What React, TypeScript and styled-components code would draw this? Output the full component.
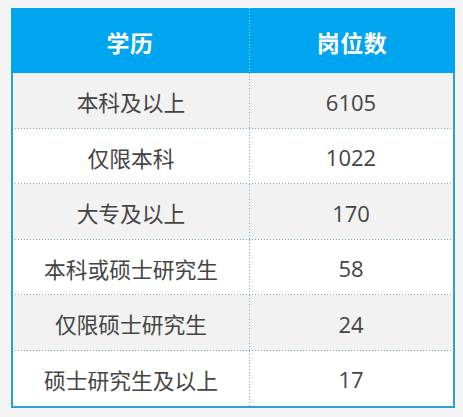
import styled, { createGlobalStyle } from "styled-components";

const GlobalStyle = createGlobalStyle`
  html, body {
    margin: 0;
    padding: 0;
    background: #f4f4f4;
  }
  body {
    font-family: "Open Sans", "Noto Sans CJK SC", sans-serif;
  }
`;

const Page = styled.div`
  width: 463px;
  height: 417px;
  padding: 8px 0 0 11px;
  box-sizing: border-box;
`;

const Table = styled.div`
  width: 444px;
`;

const dotsX = (color: string) => `
  repeating-linear-gradient(to right, ${color} 0 1px, transparent 1px 3px)
`;
const dotsY = (color: string) => `
  repeating-linear-gradient(to bottom, ${color} 0 1px, transparent 1px 3px)
`;

const HeaderRow = styled.div`
  display: grid;
  grid-template-columns: 238px 1fr;
  height: 65px;
  background: #00a5f0;
`;

const HeadCell = styled.div<{ $divider?: boolean }>`
  display: flex;
  align-items: center;
  justify-content: center;
  color: #fff;
  font-family: "Noto Sans CJK SC", sans-serif;
  font-weight: 700;
  font-size: 23px;
  letter-spacing: 0.5px;
  padding-top: 2px;
  box-sizing: border-box;
  ${(p) =>
    p.$divider &&
    `
    background: ${dotsY("rgba(255,255,255,0.75)")};
    background-size: 1px 100%;
    background-repeat: no-repeat;
  `}
`;

const Body = styled.div`
  border: 2px solid #2c9fd5;
  border-top: none;
`;

const Row = styled.div<{ $shade: boolean; $last: boolean }>`
  display: grid;
  grid-template-columns: 236px 1fr;
  height: 55.5px;
  background-color: ${(p) => (p.$shade ? "#f2f2f2" : "#ffffff")};
  ${(p) =>
    !p.$last &&
    `
    background-image: ${dotsX("#7fa9c2")};
    background-size: calc(100% - 4px) 1px;
    background-position: 2px 100%;
    background-repeat: no-repeat;
  `}
`;

const Cell = styled.div<{ $divider?: boolean; $num?: boolean }>`
  display: flex;
  align-items: center;
  justify-content: center;
  color: #444;
  font-family: ${(p) =>
    p.$num ? `"Open Sans", sans-serif` : `"Noto Sans CJK SC", sans-serif`};
  font-size: ${(p) => (p.$num ? "22px" : "21.75px")};
  padding-top: 2px;
  box-sizing: border-box;
  ${(p) =>
    p.$divider &&
    `
    background-image: ${dotsY("#7fa9c2")};
    background-size: 1px 100%;
    background-repeat: no-repeat;
  `}
`;

const rows = [
  { degree: "本科及以上", count: 6105 },
  { degree: "仅限本科", count: 1022 },
  { degree: "大专及以上", count: 170 },
  { degree: "本科或硕士研究生", count: 58 },
  { degree: "仅限硕士研究生", count: 24 },
  { degree: "硕士研究生及以上", count: 17 },
];

export default function App() {
  return (
    <>
      <GlobalStyle />
      <Page>
        <Table>
          <HeaderRow>
            <HeadCell>学历</HeadCell>
            <HeadCell $divider>岗位数</HeadCell>
          </HeaderRow>
          <Body>
            {rows.map((r, i) => (
              <Row key={r.degree} $shade={i % 2 === 0} $last={i === rows.length - 1}>
                <Cell>{r.degree}</Cell>
                <Cell $divider $num>
                  {r.count}
                </Cell>
              </Row>
            ))}
          </Body>
        </Table>
      </Page>
    </>
  );
}
